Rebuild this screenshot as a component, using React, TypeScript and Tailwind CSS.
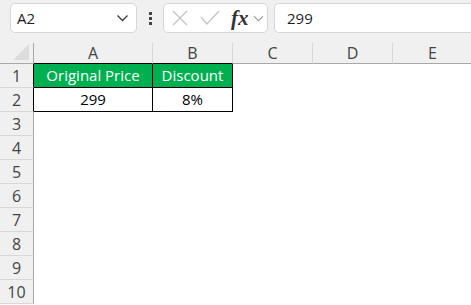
import React from 'react';

const COLS = ['A', 'B', 'C', 'D', 'E'];
const ROWS = [1, 2, 3, 4, 5, 6, 7, 8, 9, 10];

const Chevron: React.FC<{ className?: string }> = ({ className }) => (
  <svg viewBox="0 0 12 8" className={className} fill="none" stroke="currentColor" strokeWidth="1.3">
    <path d="M1 1.5 L6 6.5 L11 1.5" />
  </svg>
);

const Toolbar: React.FC = () => (
  <div className="flex h-[43px] items-start gap-0 bg-[#f0f0f0] pt-[3px]">
    <div className="ml-[10px] flex h-[30px] w-[127px] items-center justify-between rounded-[5px] border border-[#d6d6d6] bg-white pl-[6px] pr-[7px]">
      <span className="text-[15px] text-[#1f1f1f]">A2</span>
      <Chevron className="h-[8px] w-[13px] text-[#3a3a3a]" />
    </div>
    <div className="flex h-[30px] w-[26px] flex-col items-center justify-center gap-[2px]">
      <span className="h-[3px] w-[3px] bg-[#444]" />
      <span className="h-[3px] w-[3px] bg-[#444]" />
      <span className="h-[3px] w-[3px] bg-[#444]" />
    </div>
    <div className="flex h-[30px] w-[105px] items-center rounded-[5px] border border-[#d6d6d6] bg-white pl-[8px]">
      <svg viewBox="0 0 16 16" className="h-[16px] w-[16px]" fill="none" stroke="#c4c4c4" strokeWidth="1.3">
        <path d="M1 1 L15 15 M15 1 L1 15" />
      </svg>
      <svg viewBox="0 0 20 16" className="ml-[12px] h-[16px] w-[20px]" fill="none" stroke="#c4c4c4" strokeWidth="1.3">
        <path d="M1 7 L7 14 L19 1" />
      </svg>
      <span className="ml-[11px] text-[21px] font-bold italic leading-none text-[#333]" style={{ fontFamily: '"Liberation Serif", serif' }}>
        fx
      </span>
      <Chevron className="ml-[4px] h-[7px] w-[11px] text-[#9a9a9a]" />
    </div>
    <div className="ml-[6px] flex h-[30px] flex-1 items-center rounded-l-[5px] border border-r-0 border-[#d6d6d6] bg-white pl-[12px]">
      <span className="text-[15px] text-[#1f1f1f]">299</span>
    </div>
  </div>
);

const App: React.FC = () => {
  return (
    <div className="h-[305px] w-[471px] overflow-hidden bg-white" style={{ fontFamily: '"Open Sans", "Liberation Sans", sans-serif' }}>
      <Toolbar />
      <div className="grid grid-cols-[34px_119px_80px_80px_80px_80px]">
        {/* header row */}
        <div className="relative h-[21px] border-b border-r border-[#a8a8a8] bg-[#f0f0f0]">
          <svg viewBox="0 0 16 16" className="absolute bottom-[3px] right-[4px] h-[16px] w-[16px]">
            <polygon points="16,0 16,16 0,16" fill="#dcdcdc" />
          </svg>
        </div>
        {COLS.map((c, i) => (
          <div
            key={c}
            className={
              i < 2
                ? 'flex h-[21px] items-center justify-center border-b border-r border-b-black border-r-[#d8d8d8] bg-[#f0f0f0] text-[16px] text-[#444]'
                : 'flex h-[21px] items-center justify-center border-b border-r border-b-[#a8a8a8] border-r-[#d8d8d8] bg-[#f0f0f0] text-[16px] text-[#444]'
            }
          >
            {c}
          </div>
        ))}
        {ROWS.map((r) => (
          <React.Fragment key={r}>
            <div
              className={
                r <= 2
                  ? 'flex h-[24px] items-center justify-center border-b border-r border-b-[#d8d8d8] border-r-black bg-[#f0f0f0] text-[16px] text-[#444]'
                  : 'flex h-[24px] items-center justify-center border-b border-r border-b-[#d8d8d8] border-r-[#a8a8a8] bg-[#f0f0f0] text-[16px] text-[#444]'
              }
            >
              {r}
            </div>
            {r === 1 && (
              <>
                <div className="flex h-[24px] items-center justify-center border-r border-b border-black bg-[#00b050] text-[15px] text-white">
                  Original Price
                </div>
                <div className="flex h-[24px] items-center justify-center border-r border-b border-black bg-[#00b050] text-[15px] text-white">
                  Discount
                </div>
              </>
            )}
            {r === 2 && (
              <>
                <div className="flex h-[24px] items-center justify-center border-r border-b border-black text-[15px] text-black">299</div>
                <div className="flex h-[24px] items-center justify-center border-r border-b border-black text-[15px] text-black">8%</div>
              </>
            )}
            {r > 2 && (
              <>
                <div className="h-[24px]" />
                <div className="h-[24px]" />
              </>
            )}
            <div className="h-[24px]" />
            <div className="h-[24px]" />
            <div className="h-[24px]" />
          </React.Fragment>
        ))}
      </div>
    </div>
  );
};

export default App;
